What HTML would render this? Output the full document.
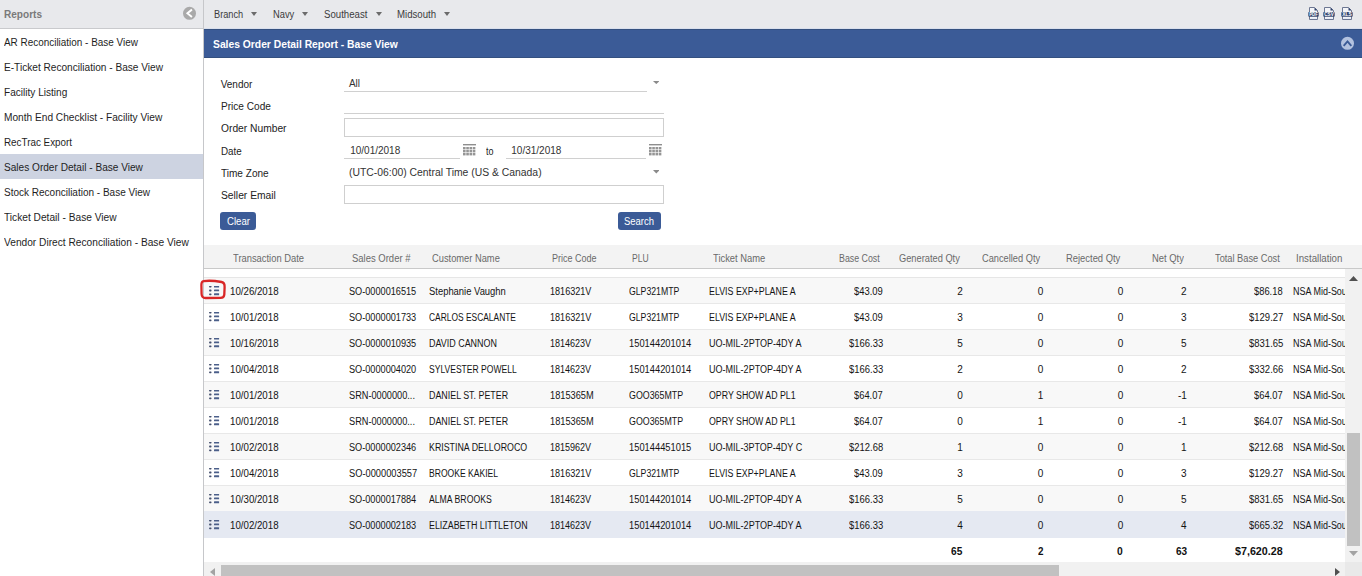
<!DOCTYPE html>
<html><head><meta charset="utf-8"><title>Sales Order Detail Report</title>
<style>
html,body{margin:0;padding:0;width:1362px;height:576px;overflow:hidden;background:#fff;position:relative;font-family:'Liberation Sans', sans-serif}
.t{position:absolute;white-space:nowrap;line-height:12px;font-family:'Liberation Sans', sans-serif;transform-origin:0 0}
.r{position:absolute}
.clip{position:absolute;overflow:hidden}
</style></head><body>
<div class="r" style="left:0px;top:0px;width:203px;height:28px;background:#e8e9ec"></div>
<div class="r" style="left:0px;top:28px;width:203px;height:1px;background:#c9cacd"></div>
<div class="r" style="left:203px;top:0px;width:1px;height:576px;background:#c6c7ca"></div>
<div class="t" style="left:4.20px;top:9.00px;font-size:10px;font-weight:700;color:#7a7a7a;transform:scaleX(1.0053);">Reports</div>
<svg class="r" style="left:182px;top:6px" width="15" height="15" viewBox="0 0 15 15"><circle cx="7.5" cy="7.3" r="6.5" fill="#a9a9a9"/><path d="M9.2 4.2 L5.4 7.3 L9.2 10.4" stroke="#fff" stroke-width="1.9" fill="none" stroke-linecap="square"/></svg>
<div class="t" style="left:4.00px;top:37.00px;font-size:10px;font-weight:400;color:#1e1e1e;transform:scaleX(0.9926);">AR Reconciliation - Base View</div>
<div class="t" style="left:4.00px;top:62.00px;font-size:10px;font-weight:400;color:#1e1e1e;transform:scaleX(1.0111);">E-Ticket Reconciliation - Base View</div>
<div class="t" style="left:4.00px;top:87.00px;font-size:10px;font-weight:400;color:#1e1e1e;transform:scaleX(1.0079);">Facility Listing</div>
<div class="t" style="left:4.00px;top:112.00px;font-size:10px;font-weight:400;color:#1e1e1e;transform:scaleX(1.0143);">Month End Checklist - Facility View</div>
<div class="t" style="left:4.00px;top:137.00px;font-size:10px;font-weight:400;color:#1e1e1e;transform:scaleX(0.9857);">RecTrac Export</div>
<div class="r" style="left:0px;top:154px;width:203px;height:25px;background:#cdd3e1"></div>
<div class="t" style="left:4.00px;top:162.00px;font-size:10px;font-weight:400;color:#1e1e1e;transform:scaleX(1.0091);">Sales Order Detail - Base View</div>
<div class="t" style="left:4.00px;top:187.00px;font-size:10px;font-weight:400;color:#1e1e1e;">Stock Reconciliation - Base View</div>
<div class="t" style="left:4.00px;top:212.00px;font-size:10px;font-weight:400;color:#1e1e1e;transform:scaleX(1.0180);">Ticket Detail - Base View</div>
<div class="t" style="left:4.00px;top:237.00px;font-size:10px;font-weight:400;color:#1e1e1e;transform:scaleX(1.0179);">Vendor Direct Reconciliation - Base View</div>
<div class="r" style="left:204px;top:0px;width:1158px;height:29px;background:#e8e9ec"></div>
<div class="r" style="left:204px;top:28px;width:1158px;height:1px;background:#d9dfec"></div>
<div class="t" style="left:213.70px;top:9.00px;font-size:10px;font-weight:400;color:#3c3c3c;transform:scaleX(0.9219);">Branch</div>
<svg class="r" style="left:251px;top:12px" width="6" height="4" viewBox="0 0 6 4"><path d="M0 0 L6 0 L3.0 4 Z" fill="#6b6b6b"/></svg>
<div class="t" style="left:272.70px;top:9.00px;font-size:10px;font-weight:400;color:#3c3c3c;transform:scaleX(0.9348);">Navy</div>
<svg class="r" style="left:302px;top:12px" width="6" height="4" viewBox="0 0 6 4"><path d="M0 0 L6 0 L3.0 4 Z" fill="#6b6b6b"/></svg>
<div class="t" style="left:323.50px;top:9.00px;font-size:10px;font-weight:400;color:#3c3c3c;transform:scaleX(0.9652);">Southeast</div>
<svg class="r" style="left:376px;top:12px" width="6" height="4" viewBox="0 0 6 4"><path d="M0 0 L6 0 L3.0 4 Z" fill="#6b6b6b"/></svg>
<div class="t" style="left:396.60px;top:9.00px;font-size:10px;font-weight:400;color:#3c3c3c;transform:scaleX(0.9634);">Midsouth</div>
<svg class="r" style="left:444px;top:12px" width="6" height="4" viewBox="0 0 6 4"><path d="M0 0 L6 0 L3.0 4 Z" fill="#6b6b6b"/></svg>
<svg class="r" style="left:1307.5px;top:7px" width="11" height="13" viewBox="0 0 11 13">
<path d="M1.5 0.5 H6.5 L9.5 3.5 V12.5 H1.5 Z" fill="#f3f4f8" stroke="#6d7792" stroke-width="1"/>
<path d="M6.5 0.5 L9.5 3.5 H6.5 Z" fill="#34466e"/>
<rect x="0.3" y="5" width="10.4" height="4.8" rx="0.8" fill="#34466e"/>
<text x="5.5" y="9.2" font-family="Liberation Sans" font-size="4.8" font-weight="bold" fill="#fff" text-anchor="middle" textLength="8.5" lengthAdjust="spacingAndGlyphs">PDF</text>
<rect x="2.5" y="11" width="6" height="0.8" fill="#e3e9f6"/>
</svg>
<svg class="r" style="left:1323px;top:7px" width="12" height="13" viewBox="0 0 12 13">
<path d="M1.5 0.5 H7.5 L10.5 3.5 V12.5 H1.5 Z" fill="#f3f4f8" stroke="#6d7792" stroke-width="1"/>
<path d="M7.5 0.5 L10.5 3.5 H7.5 Z" fill="#34466e"/>
<rect x="0.3" y="5" width="11.4" height="4.8" rx="0.8" fill="#34466e"/>
<text x="6.0" y="9.2" font-family="Liberation Sans" font-size="4.8" font-weight="bold" fill="#fff" text-anchor="middle" textLength="9.5" lengthAdjust="spacingAndGlyphs">CSV</text>
<rect x="2.5" y="11" width="7" height="0.8" fill="#e3e9f6"/>
</svg>
<svg class="r" style="left:1340.5px;top:7px" width="12" height="13" viewBox="0 0 12 13">
<path d="M1.5 0.5 H7.5 L10.5 3.5 V12.5 H1.5 Z" fill="#f3f4f8" stroke="#6d7792" stroke-width="1"/>
<path d="M7.5 0.5 L10.5 3.5 H7.5 Z" fill="#34466e"/>
<rect x="0.3" y="5" width="11.4" height="4.8" rx="0.8" fill="#34466e"/>
<text x="6.0" y="9.2" font-family="Liberation Sans" font-size="4.8" font-weight="bold" fill="#fff" text-anchor="middle" textLength="9.5" lengthAdjust="spacingAndGlyphs">XLS</text>
<rect x="2.5" y="11" width="7" height="0.8" fill="#e3e9f6"/>
</svg>
<div class="r" style="left:204px;top:29px;width:1158px;height:29px;background:#3b5b97;box-shadow:inset 0 1px 0 #34507f, inset 0 -1px 0 #34507f"></div>
<div class="t" style="left:213.20px;top:39.00px;font-size:10.4px;font-weight:700;color:#ffffff;transform:scaleX(0.9920);">Sales Order Detail Report - Base View</div>
<svg class="r" style="left:1340px;top:36px" width="15" height="15" viewBox="0 0 15 15"><circle cx="7.5" cy="7.3" r="6.5" fill="#b3c2df"/><path d="M4.3 9.1 L7.5 5.4 L10.7 9.1" stroke="#3b5b97" stroke-width="1.9" fill="none" stroke-linecap="square"/></svg>
<div class="t" style="left:220.70px;top:79.00px;font-size:10px;font-weight:400;color:#222;">Vendor</div>
<div class="t" style="left:220.70px;top:101.00px;font-size:10px;font-weight:400;color:#222;transform:scaleX(1.0080);">Price Code</div>
<div class="t" style="left:220.70px;top:123.00px;font-size:10px;font-weight:400;color:#222;transform:scaleX(1.0250);">Order Number</div>
<div class="t" style="left:220.70px;top:146.00px;font-size:10px;font-weight:400;color:#222;transform:scaleX(0.9810);">Date</div>
<div class="t" style="left:220.70px;top:168.00px;font-size:10px;font-weight:400;color:#222;transform:scaleX(1.0052);">Time Zone</div>
<div class="t" style="left:220.70px;top:190.00px;font-size:10px;font-weight:400;color:#222;transform:scaleX(1.0283);">Seller Email</div>
<div class="t" style="left:348.90px;top:78.00px;font-size:10px;font-weight:400;color:#333;">All</div>
<div class="r" style="left:344px;top:91px;width:303px;height:1px;background:#d0d0d0"></div>
<svg class="r" style="left:652.6px;top:80.9px" width="6.6" height="3.1" viewBox="0 0 6.6 3.1"><path d="M0 0 L6.6 0 L3.3 3.1 Z" fill="#8a8a8a"/></svg>
<div class="r" style="left:344px;top:113px;width:320px;height:1px;background:#d0d0d0"></div>
<div class="r" style="left:344px;top:118px;width:320px;height:19px;box-sizing:border-box;border:1px solid #cfcfcf;background:#fff"></div>
<div class="t" style="left:350.20px;top:145.00px;font-size:10px;font-weight:400;color:#333;">10/01/2018</div>
<div class="r" style="left:344px;top:158px;width:116px;height:1px;background:#d0d0d0"></div>
<div class="t" style="left:511.30px;top:145.00px;font-size:10px;font-weight:400;color:#333;">10/31/2018</div>
<div class="r" style="left:506px;top:158px;width:140px;height:1px;background:#d0d0d0"></div>
<div class="t" style="left:485.80px;top:146.00px;font-size:10px;font-weight:400;color:#222;transform:scaleX(0.9000);">to</div>
<svg class="r" style="left:463px;top:144px" width="13" height="12" viewBox="0 0 13 12"><rect x="0" y="0" width="13" height="1.4" fill="#8e8e8e"/><rect x="0.00" y="3" width="2.6" height="2.4" fill="#959595"/><rect x="3.25" y="3" width="2.6" height="2.4" fill="#959595"/><rect x="6.50" y="3" width="2.6" height="2.4" fill="#959595"/><rect x="9.75" y="3" width="2.6" height="2.4" fill="#959595"/><rect x="0.00" y="6" width="2.6" height="2.4" fill="#959595"/><rect x="3.25" y="6" width="2.6" height="2.4" fill="#959595"/><rect x="6.50" y="6" width="2.6" height="2.4" fill="#959595"/><rect x="9.75" y="6" width="2.6" height="2.4" fill="#959595"/><rect x="0.00" y="9" width="2.6" height="2.4" fill="#959595"/><rect x="3.25" y="9" width="2.6" height="2.4" fill="#959595"/><rect x="6.50" y="9" width="2.6" height="2.4" fill="#959595"/><rect x="9.75" y="9" width="2.6" height="2.4" fill="#959595"/></svg>
<svg class="r" style="left:649px;top:144px" width="13" height="12" viewBox="0 0 13 12"><rect x="0" y="0" width="13" height="1.4" fill="#8e8e8e"/><rect x="0.00" y="3" width="2.6" height="2.4" fill="#959595"/><rect x="3.25" y="3" width="2.6" height="2.4" fill="#959595"/><rect x="6.50" y="3" width="2.6" height="2.4" fill="#959595"/><rect x="9.75" y="3" width="2.6" height="2.4" fill="#959595"/><rect x="0.00" y="6" width="2.6" height="2.4" fill="#959595"/><rect x="3.25" y="6" width="2.6" height="2.4" fill="#959595"/><rect x="6.50" y="6" width="2.6" height="2.4" fill="#959595"/><rect x="9.75" y="6" width="2.6" height="2.4" fill="#959595"/><rect x="0.00" y="9" width="2.6" height="2.4" fill="#959595"/><rect x="3.25" y="9" width="2.6" height="2.4" fill="#959595"/><rect x="6.50" y="9" width="2.6" height="2.4" fill="#959595"/><rect x="9.75" y="9" width="2.6" height="2.4" fill="#959595"/></svg>
<div class="t" style="left:349.00px;top:167.00px;font-size:10px;font-weight:400;color:#333;transform:scaleX(1.0376);">(UTC-06:00) Central Time (US &amp; Canada)</div>
<svg class="r" style="left:652.6px;top:170px" width="6.6" height="3.5" viewBox="0 0 6.6 3.5"><path d="M0 0 L6.6 0 L3.3 3.5 Z" fill="#8a8a8a"/></svg>
<div class="r" style="left:344px;top:185px;width:320px;height:19px;box-sizing:border-box;border:1px solid #cfcfcf;background:#fff"></div>
<div class="r" style="left:220px;top:212px;width:36px;height:18px;background:#3b5b97;border-radius:3px"></div>
<div class="t" style="left:226.90px;top:216.00px;font-size:10px;font-weight:400;color:#fff;transform:scaleX(0.9583);">Clear</div>
<div class="r" style="left:618px;top:212px;width:43px;height:18px;background:#3b5b97;border-radius:3px"></div>
<div class="t" style="left:624.25px;top:216.00px;font-size:10px;font-weight:400;color:#fff;transform:scaleX(0.9453);">Search</div>
<div class="r" style="left:204px;top:245px;width:1158px;height:23px;background:#f3f3f3"></div>
<div class="r" style="left:204px;top:268px;width:1158px;height:1px;background:#c9c9c9"></div>
<div class="t" style="left:232.50px;top:253.00px;font-size:10px;font-weight:400;color:#6a6a6a;transform:scaleX(0.9375);">Transaction Date</div>
<div class="t" style="left:352.00px;top:253.00px;font-size:10px;font-weight:400;color:#6a6a6a;transform:scaleX(0.9476);">Sales Order #</div>
<div class="t" style="left:432.00px;top:253.00px;font-size:10px;font-weight:400;color:#6a6a6a;transform:scaleX(0.9315);">Customer Name</div>
<div class="t" style="left:552.00px;top:253.00px;font-size:10px;font-weight:400;color:#6a6a6a;transform:scaleX(0.9000);">Price Code</div>
<div class="t" style="left:632.00px;top:253.00px;font-size:10px;font-weight:400;color:#6a6a6a;transform:scaleX(0.8553);">PLU</div>
<div class="t" style="left:712.50px;top:253.00px;font-size:10px;font-weight:400;color:#6a6a6a;transform:scaleX(0.9375);">Ticket Name</div>
<div class="t" style="left:1296.10px;top:253.00px;font-size:10px;font-weight:400;color:#6a6a6a;transform:scaleX(0.9708);">Installation</div>
<div class="t" style="left:838.70px;top:253.00px;font-size:10px;font-weight:400;color:#6a6a6a;transform:scaleX(0.8830);">Base Cost</div>
<div class="t" style="left:898.90px;top:253.00px;font-size:10px;font-weight:400;color:#6a6a6a;transform:scaleX(0.9273);">Generated Qty</div>
<div class="t" style="left:981.75px;top:253.00px;font-size:10px;font-weight:400;color:#6a6a6a;transform:scaleX(0.9246);">Cancelled Qty</div>
<div class="t" style="left:1065.50px;top:253.00px;font-size:10px;font-weight:400;color:#6a6a6a;transform:scaleX(0.9397);">Rejected Qty</div>
<div class="t" style="left:1151.75px;top:253.00px;font-size:10px;font-weight:400;color:#6a6a6a;transform:scaleX(0.9412);">Net Qty</div>
<div class="t" style="left:1214.50px;top:253.00px;font-size:10px;font-weight:400;color:#6a6a6a;transform:scaleX(0.9254);">Total Base Cost</div>
<div class="r" style="left:204px;top:277px;width:1141px;height:1px;background:#e6e6e6"></div>
<div class="clip" style="left:204px;top:278px;width:1141px;height:284px">
<div class="r" style="left:0;top:0px;width:1141px;height:25px;background:#f8f8f8"></div>
<div class="r" style="left:0;top:25px;width:1141px;height:1px;background:#e8e8e8"></div>
<svg class="r" style="left:5px;top:8px" width="11" height="10" viewBox="0 0 11 10"><rect x="0.1" y="-0.40" width="2.4" height="1.9" rx="0.7" fill="#45506e"/><rect x="5" y="-0.45" width="5.1" height="1.9" rx="0.5" fill="#4b5f8a"/><rect x="0.1" y="3.50" width="2.4" height="1.9" rx="0.7" fill="#45506e"/><rect x="5" y="3.45" width="5.1" height="1.9" rx="0.5" fill="#4b5f8a"/><rect x="0.1" y="7.40" width="2.4" height="1.9" rx="0.7" fill="#45506e"/><rect x="5" y="7.35" width="5.1" height="1.9" rx="0.5" fill="#4b5f8a"/></svg>
<div class="t" style="left:25.50px;top:8.00px;font-size:10px;font-weight:400;color:#141414;transform:scaleX(0.9700);">10/26/2018</div>
<div class="t" style="left:144.75px;top:8.00px;font-size:10px;font-weight:400;color:#141414;transform:scaleX(0.9155);">SO-0000016515</div>
<div class="t" style="left:225.00px;top:8.00px;font-size:10px;font-weight:400;color:#141414;transform:scaleX(0.9421);">Stephanie Vaughn</div>
<div class="t" style="left:345.60px;top:8.00px;font-size:10px;font-weight:400;color:#141414;transform:scaleX(0.9076);">1816321V</div>
<div class="t" style="left:424.90px;top:8.00px;font-size:10px;font-weight:400;color:#141414;transform:scaleX(0.8707);">GLP321MTP</div>
<div class="t" style="left:505.30px;top:8.00px;font-size:10px;font-weight:400;color:#141414;transform:scaleX(0.8852);">ELVIS EXP+PLANE A</div>
<div class="t" style="left:649.75px;top:8.00px;font-size:10px;font-weight:400;color:#141414;transform:scaleX(0.9435);">$43.09</div>
<div class="t" style="left:753.20px;top:8.00px;font-size:10px;font-weight:400;color:#141414;">2</div>
<div class="t" style="left:833.80px;top:8.00px;font-size:10px;font-weight:400;color:#141414;">0</div>
<div class="t" style="left:913.80px;top:8.00px;font-size:10px;font-weight:400;color:#141414;">0</div>
<div class="t" style="left:977.00px;top:8.00px;font-size:10px;font-weight:400;color:#141414;">2</div>
<div class="t" style="left:1050.10px;top:8.00px;font-size:10px;font-weight:400;color:#141414;transform:scaleX(0.9355);">$86.18</div>
<div class="t" style="left:1089.20px;top:8.00px;font-size:10px;font-weight:400;color:#141414;transform:scaleX(0.8971);">NSA Mid-South</div>
<div class="r" style="left:0;top:26px;width:1141px;height:25px;background:#ffffff"></div>
<div class="r" style="left:0;top:51px;width:1141px;height:1px;background:#e8e8e8"></div>
<svg class="r" style="left:5px;top:34px" width="11" height="10" viewBox="0 0 11 10"><rect x="0.1" y="-0.40" width="2.4" height="1.9" rx="0.7" fill="#45506e"/><rect x="5" y="-0.45" width="5.1" height="1.9" rx="0.5" fill="#4b5f8a"/><rect x="0.1" y="3.50" width="2.4" height="1.9" rx="0.7" fill="#45506e"/><rect x="5" y="3.45" width="5.1" height="1.9" rx="0.5" fill="#4b5f8a"/><rect x="0.1" y="7.40" width="2.4" height="1.9" rx="0.7" fill="#45506e"/><rect x="5" y="7.35" width="5.1" height="1.9" rx="0.5" fill="#4b5f8a"/></svg>
<div class="t" style="left:25.50px;top:34.00px;font-size:10px;font-weight:400;color:#141414;transform:scaleX(0.9700);">10/01/2018</div>
<div class="t" style="left:144.75px;top:34.00px;font-size:10px;font-weight:400;color:#141414;transform:scaleX(0.9155);">SO-0000001733</div>
<div class="t" style="left:225.00px;top:34.00px;font-size:10px;font-weight:400;color:#141414;transform:scaleX(0.8413);">CARLOS ESCALANTE</div>
<div class="t" style="left:345.60px;top:34.00px;font-size:10px;font-weight:400;color:#141414;transform:scaleX(0.9076);">1816321V</div>
<div class="t" style="left:424.90px;top:34.00px;font-size:10px;font-weight:400;color:#141414;transform:scaleX(0.8707);">GLP321MTP</div>
<div class="t" style="left:505.30px;top:34.00px;font-size:10px;font-weight:400;color:#141414;transform:scaleX(0.8852);">ELVIS EXP+PLANE A</div>
<div class="t" style="left:649.75px;top:34.00px;font-size:10px;font-weight:400;color:#141414;transform:scaleX(0.9435);">$43.09</div>
<div class="t" style="left:753.20px;top:34.00px;font-size:10px;font-weight:400;color:#141414;">3</div>
<div class="t" style="left:833.80px;top:34.00px;font-size:10px;font-weight:400;color:#141414;">0</div>
<div class="t" style="left:913.80px;top:34.00px;font-size:10px;font-weight:400;color:#141414;">0</div>
<div class="t" style="left:977.00px;top:34.00px;font-size:10px;font-weight:400;color:#141414;">3</div>
<div class="t" style="left:1044.90px;top:34.00px;font-size:10px;font-weight:400;color:#141414;transform:scaleX(0.9500);">$129.27</div>
<div class="t" style="left:1089.20px;top:34.00px;font-size:10px;font-weight:400;color:#141414;transform:scaleX(0.8971);">NSA Mid-South</div>
<div class="r" style="left:0;top:52px;width:1141px;height:25px;background:#f8f8f8"></div>
<div class="r" style="left:0;top:77px;width:1141px;height:1px;background:#e8e8e8"></div>
<svg class="r" style="left:5px;top:60px" width="11" height="10" viewBox="0 0 11 10"><rect x="0.1" y="-0.40" width="2.4" height="1.9" rx="0.7" fill="#45506e"/><rect x="5" y="-0.45" width="5.1" height="1.9" rx="0.5" fill="#4b5f8a"/><rect x="0.1" y="3.50" width="2.4" height="1.9" rx="0.7" fill="#45506e"/><rect x="5" y="3.45" width="5.1" height="1.9" rx="0.5" fill="#4b5f8a"/><rect x="0.1" y="7.40" width="2.4" height="1.9" rx="0.7" fill="#45506e"/><rect x="5" y="7.35" width="5.1" height="1.9" rx="0.5" fill="#4b5f8a"/></svg>
<div class="t" style="left:25.50px;top:60.00px;font-size:10px;font-weight:400;color:#141414;transform:scaleX(0.9700);">10/16/2018</div>
<div class="t" style="left:144.75px;top:60.00px;font-size:10px;font-weight:400;color:#141414;transform:scaleX(0.9155);">SO-0000010935</div>
<div class="t" style="left:225.00px;top:60.00px;font-size:10px;font-weight:400;color:#141414;transform:scaleX(0.8947);">DAVID CANNON</div>
<div class="t" style="left:345.60px;top:60.00px;font-size:10px;font-weight:400;color:#141414;transform:scaleX(0.9022);">1814623V</div>
<div class="t" style="left:424.90px;top:60.00px;font-size:10px;font-weight:400;color:#141414;transform:scaleX(0.9328);">150144201014</div>
<div class="t" style="left:505.30px;top:60.00px;font-size:10px;font-weight:400;color:#141414;transform:scaleX(0.9029);">UO-MIL-2PTOP-4DY A</div>
<div class="t" style="left:645.00px;top:60.00px;font-size:10px;font-weight:400;color:#141414;transform:scaleX(0.9444);">$166.33</div>
<div class="t" style="left:753.20px;top:60.00px;font-size:10px;font-weight:400;color:#141414;">5</div>
<div class="t" style="left:833.80px;top:60.00px;font-size:10px;font-weight:400;color:#141414;">0</div>
<div class="t" style="left:913.80px;top:60.00px;font-size:10px;font-weight:400;color:#141414;">0</div>
<div class="t" style="left:977.00px;top:60.00px;font-size:10px;font-weight:400;color:#141414;">5</div>
<div class="t" style="left:1044.90px;top:60.00px;font-size:10px;font-weight:400;color:#141414;transform:scaleX(0.9500);">$831.65</div>
<div class="t" style="left:1089.20px;top:60.00px;font-size:10px;font-weight:400;color:#141414;transform:scaleX(0.8971);">NSA Mid-South</div>
<div class="r" style="left:0;top:78px;width:1141px;height:25px;background:#ffffff"></div>
<div class="r" style="left:0;top:103px;width:1141px;height:1px;background:#e8e8e8"></div>
<svg class="r" style="left:5px;top:86px" width="11" height="10" viewBox="0 0 11 10"><rect x="0.1" y="-0.40" width="2.4" height="1.9" rx="0.7" fill="#45506e"/><rect x="5" y="-0.45" width="5.1" height="1.9" rx="0.5" fill="#4b5f8a"/><rect x="0.1" y="3.50" width="2.4" height="1.9" rx="0.7" fill="#45506e"/><rect x="5" y="3.45" width="5.1" height="1.9" rx="0.5" fill="#4b5f8a"/><rect x="0.1" y="7.40" width="2.4" height="1.9" rx="0.7" fill="#45506e"/><rect x="5" y="7.35" width="5.1" height="1.9" rx="0.5" fill="#4b5f8a"/></svg>
<div class="t" style="left:25.50px;top:86.00px;font-size:10px;font-weight:400;color:#141414;transform:scaleX(0.9700);">10/04/2018</div>
<div class="t" style="left:144.75px;top:86.00px;font-size:10px;font-weight:400;color:#141414;transform:scaleX(0.9155);">SO-0000004020</div>
<div class="t" style="left:225.00px;top:86.00px;font-size:10px;font-weight:400;color:#141414;transform:scaleX(0.8544);">SYLVESTER POWELL</div>
<div class="t" style="left:345.60px;top:86.00px;font-size:10px;font-weight:400;color:#141414;transform:scaleX(0.9022);">1814623V</div>
<div class="t" style="left:424.90px;top:86.00px;font-size:10px;font-weight:400;color:#141414;transform:scaleX(0.9328);">150144201014</div>
<div class="t" style="left:505.30px;top:86.00px;font-size:10px;font-weight:400;color:#141414;transform:scaleX(0.9029);">UO-MIL-2PTOP-4DY A</div>
<div class="t" style="left:645.00px;top:86.00px;font-size:10px;font-weight:400;color:#141414;transform:scaleX(0.9444);">$166.33</div>
<div class="t" style="left:753.20px;top:86.00px;font-size:10px;font-weight:400;color:#141414;">2</div>
<div class="t" style="left:833.80px;top:86.00px;font-size:10px;font-weight:400;color:#141414;">0</div>
<div class="t" style="left:913.80px;top:86.00px;font-size:10px;font-weight:400;color:#141414;">0</div>
<div class="t" style="left:977.00px;top:86.00px;font-size:10px;font-weight:400;color:#141414;">2</div>
<div class="t" style="left:1044.90px;top:86.00px;font-size:10px;font-weight:400;color:#141414;transform:scaleX(0.9500);">$332.66</div>
<div class="t" style="left:1089.20px;top:86.00px;font-size:10px;font-weight:400;color:#141414;transform:scaleX(0.8971);">NSA Mid-South</div>
<div class="r" style="left:0;top:104px;width:1141px;height:25px;background:#f8f8f8"></div>
<div class="r" style="left:0;top:129px;width:1141px;height:1px;background:#e8e8e8"></div>
<svg class="r" style="left:5px;top:112px" width="11" height="10" viewBox="0 0 11 10"><rect x="0.1" y="-0.40" width="2.4" height="1.9" rx="0.7" fill="#45506e"/><rect x="5" y="-0.45" width="5.1" height="1.9" rx="0.5" fill="#4b5f8a"/><rect x="0.1" y="3.50" width="2.4" height="1.9" rx="0.7" fill="#45506e"/><rect x="5" y="3.45" width="5.1" height="1.9" rx="0.5" fill="#4b5f8a"/><rect x="0.1" y="7.40" width="2.4" height="1.9" rx="0.7" fill="#45506e"/><rect x="5" y="7.35" width="5.1" height="1.9" rx="0.5" fill="#4b5f8a"/></svg>
<div class="t" style="left:25.50px;top:112.00px;font-size:10px;font-weight:400;color:#141414;transform:scaleX(0.9700);">10/01/2018</div>
<div class="t" style="left:144.75px;top:112.00px;font-size:10px;font-weight:400;color:#141414;transform:scaleX(0.9201);">SRN-0000000...</div>
<div class="t" style="left:225.00px;top:112.00px;font-size:10px;font-weight:400;color:#141414;transform:scaleX(0.8876);">DANIEL ST. PETER</div>
<div class="t" style="left:345.60px;top:112.00px;font-size:10px;font-weight:400;color:#141414;transform:scaleX(0.9234);">1815365M</div>
<div class="t" style="left:424.90px;top:112.00px;font-size:10px;font-weight:400;color:#141414;transform:scaleX(0.8852);">GOO365MTP</div>
<div class="t" style="left:505.30px;top:112.00px;font-size:10px;font-weight:400;color:#141414;transform:scaleX(0.8788);">OPRY SHOW AD PL1</div>
<div class="t" style="left:650.00px;top:112.00px;font-size:10px;font-weight:400;color:#141414;transform:scaleX(0.9355);">$64.07</div>
<div class="t" style="left:753.20px;top:112.00px;font-size:10px;font-weight:400;color:#141414;">0</div>
<div class="t" style="left:833.80px;top:112.00px;font-size:10px;font-weight:400;color:#141414;">1</div>
<div class="t" style="left:913.80px;top:112.00px;font-size:10px;font-weight:400;color:#141414;">0</div>
<div class="t" style="left:974.00px;top:112.00px;font-size:10px;font-weight:400;color:#141414;">-1</div>
<div class="t" style="left:1050.10px;top:112.00px;font-size:10px;font-weight:400;color:#141414;transform:scaleX(0.9355);">$64.07</div>
<div class="t" style="left:1089.20px;top:112.00px;font-size:10px;font-weight:400;color:#141414;transform:scaleX(0.8971);">NSA Mid-South</div>
<div class="r" style="left:0;top:130px;width:1141px;height:25px;background:#ffffff"></div>
<div class="r" style="left:0;top:155px;width:1141px;height:1px;background:#e8e8e8"></div>
<svg class="r" style="left:5px;top:138px" width="11" height="10" viewBox="0 0 11 10"><rect x="0.1" y="-0.40" width="2.4" height="1.9" rx="0.7" fill="#45506e"/><rect x="5" y="-0.45" width="5.1" height="1.9" rx="0.5" fill="#4b5f8a"/><rect x="0.1" y="3.50" width="2.4" height="1.9" rx="0.7" fill="#45506e"/><rect x="5" y="3.45" width="5.1" height="1.9" rx="0.5" fill="#4b5f8a"/><rect x="0.1" y="7.40" width="2.4" height="1.9" rx="0.7" fill="#45506e"/><rect x="5" y="7.35" width="5.1" height="1.9" rx="0.5" fill="#4b5f8a"/></svg>
<div class="t" style="left:25.50px;top:138.00px;font-size:10px;font-weight:400;color:#141414;transform:scaleX(0.9700);">10/01/2018</div>
<div class="t" style="left:144.75px;top:138.00px;font-size:10px;font-weight:400;color:#141414;transform:scaleX(0.9201);">SRN-0000000...</div>
<div class="t" style="left:225.00px;top:138.00px;font-size:10px;font-weight:400;color:#141414;transform:scaleX(0.8876);">DANIEL ST. PETER</div>
<div class="t" style="left:345.60px;top:138.00px;font-size:10px;font-weight:400;color:#141414;transform:scaleX(0.9234);">1815365M</div>
<div class="t" style="left:424.90px;top:138.00px;font-size:10px;font-weight:400;color:#141414;transform:scaleX(0.8852);">GOO365MTP</div>
<div class="t" style="left:505.30px;top:138.00px;font-size:10px;font-weight:400;color:#141414;transform:scaleX(0.8788);">OPRY SHOW AD PL1</div>
<div class="t" style="left:650.00px;top:138.00px;font-size:10px;font-weight:400;color:#141414;transform:scaleX(0.9355);">$64.07</div>
<div class="t" style="left:753.20px;top:138.00px;font-size:10px;font-weight:400;color:#141414;">0</div>
<div class="t" style="left:833.80px;top:138.00px;font-size:10px;font-weight:400;color:#141414;">1</div>
<div class="t" style="left:913.80px;top:138.00px;font-size:10px;font-weight:400;color:#141414;">0</div>
<div class="t" style="left:974.00px;top:138.00px;font-size:10px;font-weight:400;color:#141414;">-1</div>
<div class="t" style="left:1050.10px;top:138.00px;font-size:10px;font-weight:400;color:#141414;transform:scaleX(0.9355);">$64.07</div>
<div class="t" style="left:1089.20px;top:138.00px;font-size:10px;font-weight:400;color:#141414;transform:scaleX(0.8971);">NSA Mid-South</div>
<div class="r" style="left:0;top:156px;width:1141px;height:25px;background:#f8f8f8"></div>
<div class="r" style="left:0;top:181px;width:1141px;height:1px;background:#e8e8e8"></div>
<svg class="r" style="left:5px;top:164px" width="11" height="10" viewBox="0 0 11 10"><rect x="0.1" y="-0.40" width="2.4" height="1.9" rx="0.7" fill="#45506e"/><rect x="5" y="-0.45" width="5.1" height="1.9" rx="0.5" fill="#4b5f8a"/><rect x="0.1" y="3.50" width="2.4" height="1.9" rx="0.7" fill="#45506e"/><rect x="5" y="3.45" width="5.1" height="1.9" rx="0.5" fill="#4b5f8a"/><rect x="0.1" y="7.40" width="2.4" height="1.9" rx="0.7" fill="#45506e"/><rect x="5" y="7.35" width="5.1" height="1.9" rx="0.5" fill="#4b5f8a"/></svg>
<div class="t" style="left:25.50px;top:164.00px;font-size:10px;font-weight:400;color:#141414;transform:scaleX(0.9700);">10/02/2018</div>
<div class="t" style="left:144.75px;top:164.00px;font-size:10px;font-weight:400;color:#141414;transform:scaleX(0.9155);">SO-0000002346</div>
<div class="t" style="left:225.00px;top:164.00px;font-size:10px;font-weight:400;color:#141414;transform:scaleX(0.8829);">KRISTINA DELLOROCO</div>
<div class="t" style="left:345.60px;top:164.00px;font-size:10px;font-weight:400;color:#141414;transform:scaleX(0.9022);">1815962V</div>
<div class="t" style="left:424.90px;top:164.00px;font-size:10px;font-weight:400;color:#141414;transform:scaleX(0.9328);">150144451015</div>
<div class="t" style="left:505.30px;top:164.00px;font-size:10px;font-weight:400;color:#141414;transform:scaleX(0.9000);">UO-MIL-3PTOP-4DY C</div>
<div class="t" style="left:645.00px;top:164.00px;font-size:10px;font-weight:400;color:#141414;transform:scaleX(0.9444);">$212.68</div>
<div class="t" style="left:753.20px;top:164.00px;font-size:10px;font-weight:400;color:#141414;">1</div>
<div class="t" style="left:833.80px;top:164.00px;font-size:10px;font-weight:400;color:#141414;">0</div>
<div class="t" style="left:913.80px;top:164.00px;font-size:10px;font-weight:400;color:#141414;">0</div>
<div class="t" style="left:977.00px;top:164.00px;font-size:10px;font-weight:400;color:#141414;">1</div>
<div class="t" style="left:1045.10px;top:164.00px;font-size:10px;font-weight:400;color:#141414;transform:scaleX(0.9444);">$212.68</div>
<div class="t" style="left:1089.20px;top:164.00px;font-size:10px;font-weight:400;color:#141414;transform:scaleX(0.8971);">NSA Mid-South</div>
<div class="r" style="left:0;top:182px;width:1141px;height:25px;background:#ffffff"></div>
<div class="r" style="left:0;top:207px;width:1141px;height:1px;background:#e8e8e8"></div>
<svg class="r" style="left:5px;top:190px" width="11" height="10" viewBox="0 0 11 10"><rect x="0.1" y="-0.40" width="2.4" height="1.9" rx="0.7" fill="#45506e"/><rect x="5" y="-0.45" width="5.1" height="1.9" rx="0.5" fill="#4b5f8a"/><rect x="0.1" y="3.50" width="2.4" height="1.9" rx="0.7" fill="#45506e"/><rect x="5" y="3.45" width="5.1" height="1.9" rx="0.5" fill="#4b5f8a"/><rect x="0.1" y="7.40" width="2.4" height="1.9" rx="0.7" fill="#45506e"/><rect x="5" y="7.35" width="5.1" height="1.9" rx="0.5" fill="#4b5f8a"/></svg>
<div class="t" style="left:25.50px;top:190.00px;font-size:10px;font-weight:400;color:#141414;transform:scaleX(0.9700);">10/04/2018</div>
<div class="t" style="left:144.75px;top:190.00px;font-size:10px;font-weight:400;color:#141414;transform:scaleX(0.9281);">SO-0000003557</div>
<div class="t" style="left:225.00px;top:190.00px;font-size:10px;font-weight:400;color:#141414;transform:scaleX(0.8568);">BROOKE KAKIEL</div>
<div class="t" style="left:345.60px;top:190.00px;font-size:10px;font-weight:400;color:#141414;transform:scaleX(0.9076);">1816321V</div>
<div class="t" style="left:424.90px;top:190.00px;font-size:10px;font-weight:400;color:#141414;transform:scaleX(0.8707);">GLP321MTP</div>
<div class="t" style="left:505.30px;top:190.00px;font-size:10px;font-weight:400;color:#141414;transform:scaleX(0.8852);">ELVIS EXP+PLANE A</div>
<div class="t" style="left:649.75px;top:190.00px;font-size:10px;font-weight:400;color:#141414;transform:scaleX(0.9435);">$43.09</div>
<div class="t" style="left:753.20px;top:190.00px;font-size:10px;font-weight:400;color:#141414;">3</div>
<div class="t" style="left:833.80px;top:190.00px;font-size:10px;font-weight:400;color:#141414;">0</div>
<div class="t" style="left:913.80px;top:190.00px;font-size:10px;font-weight:400;color:#141414;">0</div>
<div class="t" style="left:977.00px;top:190.00px;font-size:10px;font-weight:400;color:#141414;">3</div>
<div class="t" style="left:1044.90px;top:190.00px;font-size:10px;font-weight:400;color:#141414;transform:scaleX(0.9500);">$129.27</div>
<div class="t" style="left:1089.20px;top:190.00px;font-size:10px;font-weight:400;color:#141414;transform:scaleX(0.8971);">NSA Mid-South</div>
<div class="r" style="left:0;top:208px;width:1141px;height:25px;background:#f8f8f8"></div>
<div class="r" style="left:0;top:233px;width:1141px;height:1px;background:#e8e8e8"></div>
<svg class="r" style="left:5px;top:216px" width="11" height="10" viewBox="0 0 11 10"><rect x="0.1" y="-0.40" width="2.4" height="1.9" rx="0.7" fill="#45506e"/><rect x="5" y="-0.45" width="5.1" height="1.9" rx="0.5" fill="#4b5f8a"/><rect x="0.1" y="3.50" width="2.4" height="1.9" rx="0.7" fill="#45506e"/><rect x="5" y="3.45" width="5.1" height="1.9" rx="0.5" fill="#4b5f8a"/><rect x="0.1" y="7.40" width="2.4" height="1.9" rx="0.7" fill="#45506e"/><rect x="5" y="7.35" width="5.1" height="1.9" rx="0.5" fill="#4b5f8a"/></svg>
<div class="t" style="left:25.50px;top:216.00px;font-size:10px;font-weight:400;color:#141414;transform:scaleX(0.9700);">10/30/2018</div>
<div class="t" style="left:144.75px;top:216.00px;font-size:10px;font-weight:400;color:#141414;transform:scaleX(0.9155);">SO-0000017884</div>
<div class="t" style="left:225.00px;top:216.00px;font-size:10px;font-weight:400;color:#141414;transform:scaleX(0.8681);">ALMA BROOKS</div>
<div class="t" style="left:345.60px;top:216.00px;font-size:10px;font-weight:400;color:#141414;transform:scaleX(0.9022);">1814623V</div>
<div class="t" style="left:424.90px;top:216.00px;font-size:10px;font-weight:400;color:#141414;transform:scaleX(0.9328);">150144201014</div>
<div class="t" style="left:505.30px;top:216.00px;font-size:10px;font-weight:400;color:#141414;transform:scaleX(0.9029);">UO-MIL-2PTOP-4DY A</div>
<div class="t" style="left:645.00px;top:216.00px;font-size:10px;font-weight:400;color:#141414;transform:scaleX(0.9444);">$166.33</div>
<div class="t" style="left:753.20px;top:216.00px;font-size:10px;font-weight:400;color:#141414;">5</div>
<div class="t" style="left:833.80px;top:216.00px;font-size:10px;font-weight:400;color:#141414;">0</div>
<div class="t" style="left:913.80px;top:216.00px;font-size:10px;font-weight:400;color:#141414;">0</div>
<div class="t" style="left:977.00px;top:216.00px;font-size:10px;font-weight:400;color:#141414;">5</div>
<div class="t" style="left:1044.90px;top:216.00px;font-size:10px;font-weight:400;color:#141414;transform:scaleX(0.9500);">$831.65</div>
<div class="t" style="left:1089.20px;top:216.00px;font-size:10px;font-weight:400;color:#141414;transform:scaleX(0.8971);">NSA Mid-South</div>
<div class="r" style="left:0;top:233px;width:1141px;height:27px;background:#e5e9f2"></div>
<svg class="r" style="left:5px;top:242px" width="11" height="10" viewBox="0 0 11 10"><rect x="0.1" y="-0.40" width="2.4" height="1.9" rx="0.7" fill="#45506e"/><rect x="5" y="-0.45" width="5.1" height="1.9" rx="0.5" fill="#4b5f8a"/><rect x="0.1" y="3.50" width="2.4" height="1.9" rx="0.7" fill="#45506e"/><rect x="5" y="3.45" width="5.1" height="1.9" rx="0.5" fill="#4b5f8a"/><rect x="0.1" y="7.40" width="2.4" height="1.9" rx="0.7" fill="#45506e"/><rect x="5" y="7.35" width="5.1" height="1.9" rx="0.5" fill="#4b5f8a"/></svg>
<div class="t" style="left:25.50px;top:242.00px;font-size:10px;font-weight:400;color:#141414;transform:scaleX(0.9700);">10/02/2018</div>
<div class="t" style="left:144.75px;top:242.00px;font-size:10px;font-weight:400;color:#141414;transform:scaleX(0.9155);">SO-0000002183</div>
<div class="t" style="left:225.00px;top:242.00px;font-size:10px;font-weight:400;color:#141414;transform:scaleX(0.8883);">ELIZABETH LITTLETON</div>
<div class="t" style="left:345.60px;top:242.00px;font-size:10px;font-weight:400;color:#141414;transform:scaleX(0.9022);">1814623V</div>
<div class="t" style="left:424.90px;top:242.00px;font-size:10px;font-weight:400;color:#141414;transform:scaleX(0.9328);">150144201014</div>
<div class="t" style="left:505.30px;top:242.00px;font-size:10px;font-weight:400;color:#141414;transform:scaleX(0.9029);">UO-MIL-2PTOP-4DY A</div>
<div class="t" style="left:645.00px;top:242.00px;font-size:10px;font-weight:400;color:#141414;transform:scaleX(0.9444);">$166.33</div>
<div class="t" style="left:753.20px;top:242.00px;font-size:10px;font-weight:400;color:#141414;">4</div>
<div class="t" style="left:833.80px;top:242.00px;font-size:10px;font-weight:400;color:#141414;">0</div>
<div class="t" style="left:913.80px;top:242.00px;font-size:10px;font-weight:400;color:#141414;">0</div>
<div class="t" style="left:977.00px;top:242.00px;font-size:10px;font-weight:400;color:#141414;">4</div>
<div class="t" style="left:1044.90px;top:242.00px;font-size:10px;font-weight:400;color:#141414;transform:scaleX(0.9500);">$665.32</div>
<div class="t" style="left:1089.20px;top:242.00px;font-size:10px;font-weight:400;color:#141414;transform:scaleX(0.8971);">NSA Mid-South</div>
</div>
<svg class="r" style="left:196px;top:276px" width="34" height="26" viewBox="0 0 34 26"><path d="M7.5 5.2 C11 4.6 20 5.0 25.6 6.0 C28.6 6.6 28.8 8.5 28.6 11.5 L28.3 18.6 C28.1 21.0 27.0 21.8 24.5 21.9 L9.5 22.0 C6.8 22.0 5.7 20.6 5.6 18.0 L5.4 9.0 C5.4 6.5 5.8 5.4 7.5 5.2 Z" fill="none" stroke="#d92626" stroke-width="2.3"/></svg>
<div class="t" style="left:951.40px;top:545.00px;font-size:10.5px;font-weight:700;color:#111;transform:scaleX(0.9667);">65</div>
<div class="t" style="left:1037.60px;top:545.00px;font-size:10.5px;font-weight:700;color:#111;transform:scaleX(0.9333);">2</div>
<div class="t" style="left:1117.10px;top:545.00px;font-size:10.5px;font-weight:700;color:#111;transform:scaleX(0.9833);">0</div>
<div class="t" style="left:1175.50px;top:545.00px;font-size:10.5px;font-weight:700;color:#111;transform:scaleX(0.9583);">63</div>
<div class="t" style="left:1235.10px;top:545.00px;font-size:10.5px;font-weight:700;color:#111;transform:scaleX(1.0213);">$7,620.28</div>
<div class="r" style="left:1345px;top:269px;width:17px;height:293px;background:#f1f1f1"></div>
<div class="r" style="left:1347px;top:433px;width:13px;height:113px;background:#c1c1c1"></div>
<svg class="r" style="left:1349px;top:276px" width="9" height="5" viewBox="0 0 9 5"><path d="M0 5 L9 5 L4.5 0 Z" fill="#505050"/></svg>
<svg class="r" style="left:1349px;top:551px" width="9" height="5" viewBox="0 0 9 5"><path d="M0 0 L9 0 L4.5 5 Z" fill="#a3a3a3"/></svg>
<div class="r" style="left:204px;top:562px;width:1141px;height:14px;background:#f1f1f1"></div>
<div class="r" style="left:1345px;top:562px;width:17px;height:14px;background:#e9e9e9"></div>
<div class="r" style="left:221px;top:565px;width:838px;height:11px;background:#c1c1c1"></div>
<svg class="r" style="left:210px;top:568px" width="5" height="8" viewBox="0 0 5 8"><path d="M5 0 L5 8 L0 4 Z" fill="#a3a3a3"/></svg>
<svg class="r" style="left:1335px;top:568px" width="5" height="8" viewBox="0 0 5 8"><path d="M0 0 L0 8 L5 4 Z" fill="#505050"/></svg>
</body></html>
